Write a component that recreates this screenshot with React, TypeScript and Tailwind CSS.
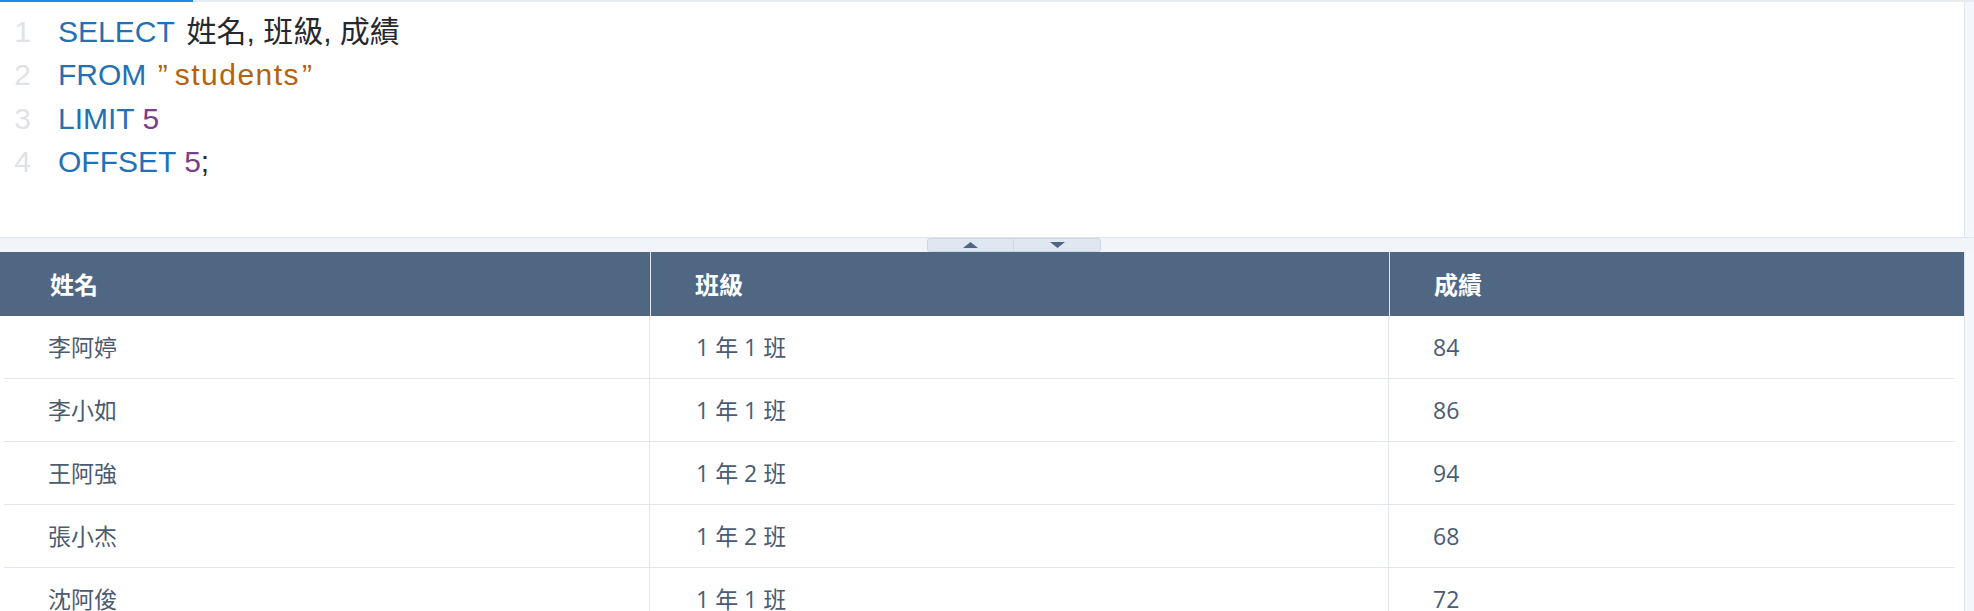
import React from 'react';

const KW = 'text-[#2371b5]';
const STR = 'text-[#b5620f]';
const NUM = 'text-[#7a3d8f]';
const TXT = 'text-[#25292e]';

const codeLines: React.ReactNode[] = [
  <>
    <span className={KW}>SELECT</span>{' '}
    <span className={`${TXT} ml-[4px]`}>姓名, 班級, 成績</span>
  </>,
  <>
    <span className={KW}>FROM</span>{' '}
    <span className={STR}>
      <span className="ml-[3px] mr-[5px] tracking-[2px]">”</span>
      <span className="tracking-[1.5px]">students</span>
      <span className="ml-[2px] tracking-[2px]">”</span>
    </span>
  </>,
  <>
    <span className={KW}>LIMIT</span> <span className={NUM}>5</span>
  </>,
  <>
    <span className={KW}>OFFSET</span> <span className={NUM}>5</span>
    <span className={TXT}>;</span>
  </>,
];

const rows = [
  { name: '李阿婷', cls: '1 年 1 班', score: '84' },
  { name: '李小如', cls: '1 年 1 班', score: '86' },
  { name: '王阿強', cls: '1 年 2 班', score: '94' },
  { name: '張小杰', cls: '1 年 2 班', score: '68' },
  { name: '沈阿俊', cls: '1 年 1 班', score: '72' },
];

const App: React.FC = () => {
  return (
    <div className="w-full h-[611px] overflow-hidden bg-white flex flex-col">
      {/* loading bar */}
      <div className="h-[2px] bg-[#e8ecf2] shrink-0">
        <div className="h-full w-[193px] bg-[#1a8ee6]"></div>
      </div>

      {/* editor */}
      <div className="h-[236px] shrink-0 flex border-b border-[#dde4ee]">
        <div className="flex-1 pt-[8px] font-['Liberation_Sans','Noto_Sans_CJK_TC',sans-serif] text-[30px] leading-[43.4px]">
          {codeLines.map((line, i) => (
            <div key={i} className="flex h-[43.4px]">
              <span className="w-[31px] text-right text-[#dfe2e8] shrink-0">{i + 1}</span>
              <span className="pl-[27px] whitespace-pre">{line}</span>
            </div>
          ))}
        </div>
        <div className="w-[10px] shrink-0 bg-[#f3f6fa] border-l border-[#dfe6ef]"></div>
      </div>

      {/* splitter */}
      <div className="h-[14px] shrink-0 bg-[#f1f5fa] flex">
        <div className="ml-[927px] w-[174px] h-full flex rounded-[3px] border border-[#cdd8e5] bg-[#dfe7f1]">
          <div className="w-[86px] h-full flex items-center justify-center border-r border-[#cdd8e5]">
            <svg width="15" height="6" viewBox="0 0 15 6">
              <path d="M7.5 0 L15 6 L0 6 Z" fill="#4f6684" />
            </svg>
          </div>
          <div className="flex-1 h-full flex items-center justify-center">
            <svg width="15" height="6" viewBox="0 0 15 6">
              <path d="M0 0 L15 0 L7.5 6 Z" fill="#4f6684" />
            </svg>
          </div>
        </div>
      </div>

      {/* table */}
      <div className="flex-1 flex min-h-0 font-['Open_Sans','Noto_Sans_CJK_TC',sans-serif]">
        <div className="flex-1 flex flex-col min-w-0">
          <div className="h-[64px] shrink-0 bg-[#506784] grid grid-cols-[651px_739px_1fr] text-white font-bold text-[24px] font-['Noto_Sans_CJK_TC',sans-serif]">
            <div className="flex items-center pl-[50px] border-r border-[#dfe6ef]">姓名</div>
            <div className="flex items-center pl-[44px] border-r border-[#dfe6ef]">班級</div>
            <div className="flex items-center pl-[44px]">成績</div>
          </div>
          <div className="ml-[4px] mr-[9px] flex flex-col">
            {rows.map((r, i) => (
              <div
                key={i}
                className="h-[63px] shrink-0 grid grid-cols-[646px_739px_1fr] border-b border-[#e3e8ef] text-[23px] text-[#4b5b72]"
              >
                <div className="flex items-center pl-[44px] border-r border-[#e3e8ef]">{r.name}</div>
                <div className="flex items-center pl-[46px] border-r border-[#e3e8ef]">{r.cls}</div>
                <div className="flex items-center pl-[44px]">{r.score}</div>
              </div>
            ))}
          </div>
        </div>
        <div className="w-[10px] shrink-0 bg-[#f3f6fa] border-l border-[#dfe6ef]"></div>
      </div>
    </div>
  );
};

export default App;
